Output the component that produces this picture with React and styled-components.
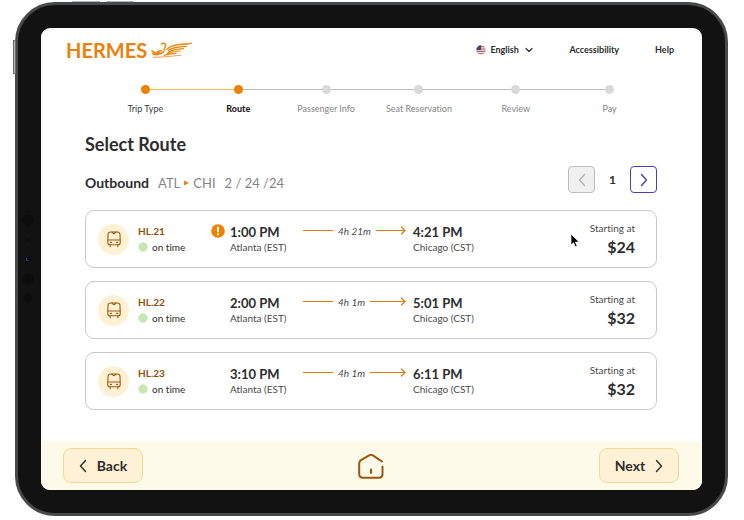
import React from 'react';
import styled, { createGlobalStyle } from 'styled-components';

const GlobalStyle = createGlobalStyle`
* {
    box-sizing: border-box;
}

body {
    margin: 0;
    background: #ffffff;
    color: #2d2d2d;
    font-family: Lato, "Liberation Sans", sans-serif;
    font-variant-ligatures: none;
}

button, select {
    font-family: inherit;
    color: inherit;
}
`;

const Page = styled.div`
    display: flex;
    min-height: 100vh;
    padding: 2px 16px 4px 15px;
`;

const Device = styled.div`
    position: relative;
    display: flex;
    flex: 1;
    padding: 23px;
    border: 3px solid #48494a;
    border-radius: 40px;
    background: #121212;
`;

const SideKey = styled.span`
    position: absolute;
    top: 35px;
    left: -5px;
    width: 3px;
    height: 34px;
    border: 1px solid #6c6c6c;
    background: #b5b5b5;
`;

const TopKey = styled.span`
    position: absolute;
    top: -4px;
    left: ${props => props.$left};
    width: 28px;
    height: 1px;
    background: #b5b5b5;
`;

const Sensors = styled.svg`
    position: absolute;
    top: 205px;
    left: 3px;
`;

const Screen = styled.div`
    display: flex;
    flex-direction: column;
    flex: 1;
    border-radius: 9px;
    background: #ffffff;
    overflow: hidden;
`;

const Header = styled.header`
    display: flex;
    align-items: center;
    justify-content: space-between;
    padding: 10px 28px 0 25px;
`;

const Brand = styled.a`
    display: flex;
    align-items: center;
    gap: 4px;
    color: #e8820c;
    font-size: 20px;
    font-weight: 700;
    line-height: 24px;
    text-decoration: none;
`;

const Nav = styled.nav`
    display: flex;
    align-items: center;
    gap: 36px;
`;

const NavLink = styled.a`
    color: #2d2d2d;
    font-size: 9px;
    font-weight: 700;
    line-height: 12px;
    text-decoration: none;
`;

const Language = styled.label`
    display: flex;
    align-items: center;
    gap: 4px;
`;

const LanguageSelect = styled.select`
    appearance: none;
    width: 31px;
    padding: 0;
    border: 0;
    background: none;
    font-size: 9px;
    font-weight: 700;
    line-height: 12px;
`;

const Steps = styled.ol`
    display: grid;
    grid-template-columns: 93fr 93fr 83fr 103fr 91fr 97fr;
    margin: 23px 44px 0 58px;
    padding: 0;
    list-style: none;
`;

const Step = styled.li`
    display: flex;
    flex-direction: column;
    gap: 9px;
    color: ${props => props.$color};
    font-size: 9px;
    font-weight: ${props => (props.$current ? 900 : 400)};
    line-height: 12px;
    text-align: center;
    white-space: nowrap;
`;

const Track = styled.span`
    display: flex;
    align-items: center;
`;

const Line = styled.span`
    flex: 1;
    height: 1px;
    background: ${props => props.$color};
`;

const Dot = styled.span`
    width: 9px;
    height: 9px;
    border-radius: 50%;
    background: ${props => (props.$done ? '#ee8100' : '#d9d9d9')};
`;

const Main = styled.main`
    flex: 1;
    padding: 17px 45px 30px 44px;
`;

const Title = styled.h1`
    margin: 0;
    font-size: 18px;
    font-weight: 700;
    line-height: 24px;
`;

const TripBar = styled.div`
    display: flex;
    align-items: center;
    justify-content: space-between;
    margin: 10px 0 17px;
`;

const Trip = styled.div`
    display: flex;
    align-items: center;
    gap: 9px;
    padding-top: 7px;
    color: #858585;
    font-size: 13px;
    line-height: 20px;
`;

const TripName = styled.h2`
    margin: 0;
    color: #2d2d2d;
    font-size: 14px;
    font-weight: 700;
`;

const Cities = styled.span`
    display: flex;
    align-items: center;
    gap: 4px;
`;

const Pager = styled.div`
    display: flex;
    align-items: center;
    gap: 14px;
    font-size: 12px;
    font-weight: 700;
`;

const PageButton = styled.button`
    display: flex;
    align-items: center;
    justify-content: center;
    width: 27px;
    height: 27px;
    padding: 0;
    border: 1px solid #4a3fb5;
    border-radius: 4px;
    background: #ffffff;
    color: #4a3fb5;

    &:disabled {
        border-color: #bdbdbd;
        background: #f0f0f0;
        color: #b5b5b5;
    }
`;

const Routes = styled.ul`
    position: relative;
    display: flex;
    flex-direction: column;
    gap: 13px;
    margin: 0;
    padding: 0;
    list-style: none;
`;

const Route = styled.li`
    display: grid;
    grid-template-columns: 40px 73px 19px 73px 110px auto 1fr;
    align-items: center;
    height: 58px;
    padding: 0 21px 0 12px;
    border: 1px solid #c9c9c9;
    border-radius: 9px;
`;

const TrainBadge = styled.span`
    display: flex;
    align-items: center;
    justify-content: center;
    width: 31px;
    height: 31px;
    border-radius: 50%;
    background: #fff1d3;
`;

const Cell = styled.div`
    display: flex;
    flex-direction: column;
    align-items: ${props => (props.$end ? 'flex-end' : 'flex-start')};
    padding-bottom: 1px;
    white-space: nowrap;
`;

const TrainName = styled.strong`
    color: #8f4f06;
    font-size: 10px;
    line-height: 16px;
`;

const Status = styled.span`
    display: flex;
    align-items: center;
    gap: 4px;
    font-size: 10px;
    line-height: 16px;
`;

const StatusDot = styled.span`
    width: 10px;
    height: 10px;
    border: 1px solid #dcead2;
    border-radius: 50%;
    background: #c6e8b0;
`;

const AlertSlot = styled.span`
    display: flex;
    height: 30px;
`;

const Time = styled.strong`
    font-size: 13px;
    line-height: 16px;
`;

const Station = styled.span`
    color: #4a4a4a;
    font-size: 10px;
    line-height: 14px;
`;

const Duration = styled.span`
    display: flex;
    align-items: center;
    gap: 5px;
    width: 103px;
    padding-bottom: 17px;
    color: #4a4a4a;
    font-size: 10px;
    font-style: italic;
    line-height: 14px;
    white-space: nowrap;
`;

const Stem = styled.span`
    width: 30px;
    height: 1px;
    background: #dd7c0c;
`;

const Arrow = styled.span`
    display: flex;
    flex: 1;
    align-items: center;
    color: #dd7c0c;
`;

const ArrowHead = styled.svg`
    margin-left: -5px;
`;

const PriceLabel = styled.span`
    color: #4a4a4a;
    font-size: 10px;
    line-height: 16px;
`;

const Price = styled.strong`
    font-size: 16px;
    line-height: 22px;
`;

const Pointer = styled.svg`
    position: absolute;
    top: 23px;
    right: 77px;
`;

const Footer = styled.footer`
    display: flex;
    align-items: center;
    justify-content: space-between;
    height: 49px;
    padding: 0 23px 0 22px;
    background: #fefaea;
`;

const FooterButton = styled.button`
    display: flex;
    align-items: center;
    justify-content: center;
    gap: 10px;
    width: 80px;
    height: 35px;
    padding: 0;
    border: 1px solid #f3d894;
    border-radius: 8px;
    background: #fff1d6;
    font-size: 14px;
    font-weight: 700;
    line-height: 20px;
`;

const HomeLink = styled.a`
    display: flex;
    color: #9c5408;
`;

const steps = [
    { name: 'Trip Type', color: '#3c3c3c', before: 'transparent', after: '#f0b95c', done: true },
    { name: 'Route', color: '#1f1f1f', before: '#f0b95c', after: '#bdbdbd', done: true, current: true },
    { name: 'Passenger Info', color: '#858585', before: '#bdbdbd', after: '#bdbdbd' },
    { name: 'Seat Reservation', color: '#858585', before: '#bdbdbd', after: '#bdbdbd' },
    { name: 'Review', color: '#858585', before: '#bdbdbd', after: '#bdbdbd' },
    { name: 'Pay', color: '#858585', before: '#bdbdbd', after: 'transparent' },
];

const routes = [
    { train: 'HL.21', depart: '1:00 PM', arrive: '4:21 PM', duration: '4h 21m', price: '$24', alert: true },
    { train: 'HL.22', depart: '2:00 PM', arrive: '5:01 PM', duration: '4h 1m', price: '$32' },
    { train: 'HL.23', depart: '3:10 PM', arrive: '6:11 PM', duration: '4h 1m', price: '$32' },
];

const Chevron = ({ left, size = 14 }) => (
    <svg width={size / 2 + 1} height={size} viewBox="0 0 8 14" fill="none" stroke="currentColor" strokeWidth="1.4" strokeLinecap="round" strokeLinejoin="round" aria-hidden="true">
        <path d={left ? 'M6.5 1.5L1.5 7l5 5.5' : 'M1.5 1.5L6.5 7l-5 5.5'} />
    </svg>
);

const WingLogo = () => (
    <svg width="42" height="17" viewBox="0 0 42 17" fill="none" stroke="#e58a1a" strokeLinecap="round" aria-hidden="true">
        <path d="M1 9l4 2.200 3.500-1M1.500 11.500c2 1.200 5.500 1.200 8 .2 1.500-.6 2.500-1.400 3.500-2.500M6.500 9.500l4-.8" strokeWidth="1.600" />
        <path d="M10.500 2.300c1-1.300 3.500-1.500 4 .2.400 1.600-1 3-1.300 5" strokeWidth="1.500" />
        <path d="M15 8C18.500 3.500 22 2 41 1.200c-3 1-6 1.500-9 1.600-6 .2-11 .7-15.500 4.500z" fill="#e58a1a" strokeWidth=".7" />
        <path d="M17.500 8.300c5-3.300 10-3.600 18-4M17 10.200c5-2.800 9-3.200 15.500-3.600M15.500 12c5-2.300 8.500-2.600 13.500-3M13 13.500c4-1.500 8-2 12-2.200" strokeWidth="1.200" />
        <path d="M2 15.200c8 .2 16-.8 28-2" strokeWidth=".8" />
    </svg>
);

const Flag = () => (
    <svg width="10" height="10" viewBox="0 0 10 10" aria-hidden="true">
        <clipPath id="flag-round">
            <circle cx="5" cy="5" r="4.700" />
        </clipPath>
        <g clipPath="url(#flag-round)">
            <path d="M0 0h10v10H0z" fill="#eee6ec" />
            <path d="M0 1h10v1.200H0zM0 3.400h10v1.200H0zM0 5.800h10V7H0zM0 8.200h10v1H0z" fill="#b5605c" />
            <path d="M0 0h5v5H0z" fill="#46437c" />
        </g>
    </svg>
);

const TrainIcon = () => (
    <svg width="14" height="17" viewBox="0 0 14 17" fill="none" stroke="#a05a10" strokeLinecap="round" strokeLinejoin="round" aria-hidden="true">
        <path d="M3.500 1h7c1.400 0 2.300.9 2.500 2.300l.2 6.200v2.300c0 1.300-.7 2-2 2H2.800c-1.300 0-2-.7-2-2V9.500L1 3.300C1.200 1.900 2.100 1 3.500 1z" strokeWidth="1.100" />
        <path d="M5 1.200L7 2.800l2-1.600M1 9h12M3.200 13.800v2M10.800 13.800v2" strokeWidth="1.100" />
        <path d="M3.300 11.300h1.200M9.500 11.300h1.200" strokeWidth="1.200" />
    </svg>
);

const AlertIcon = () => (
    <svg width="14" height="14" viewBox="0 0 14 14" role="img" aria-label="Service alert">
        <circle cx="7" cy="7" r="6.800" fill="#ee8100" />
        <path d="M7 3.300v4.200" stroke="#ffffff" strokeWidth="1.800" strokeLinecap="round" />
        <circle cx="7" cy="10.400" r="1.100" fill="#ffffff" />
    </svg>
);

const HomeIcon = () => (
    <svg width="26" height="26" viewBox="0 0 26 26" fill="none" stroke="currentColor" strokeWidth="2" strokeLinecap="round" strokeLinejoin="round" aria-hidden="true">
        <path d="M24 8.500L14.500 2.200c-1-.7-2-.7-3 0L3 7.200C1.800 8 1.200 9 1.200 10.500V21c0 2.500 1.300 3.800 3.800 3.800h16c2.500 0 3.500-1.300 3.500-3.800v-7.500" />
        <path d="M13 16.500v3.500" />
    </svg>
);

const RouteCard = ({ data }) => (
    <Route>
        <TrainBadge><TrainIcon /></TrainBadge>
        <Cell>
            <TrainName>{data.train}</TrainName>
            <Status><StatusDot />on time</Status>
        </Cell>
        <AlertSlot>{data.alert && <AlertIcon />}</AlertSlot>
        <Cell>
            <Time>{data.depart}</Time>
            <Station>Atlanta (EST)</Station>
        </Cell>
        <Duration>
            <Stem />
            {data.duration}
            <Arrow>
                <Line $color="#dd7c0c" />
                <ArrowHead width="6" height="9" viewBox="0 0 6 9" fill="none" stroke="currentColor" strokeWidth="1.200" strokeLinecap="round">
                    <path d="M1.500 1l3.500 3.500L1.500 8" />
                </ArrowHead>
            </Arrow>
        </Duration>
        <Cell>
            <Time>{data.arrive}</Time>
            <Station>Chicago (CST)</Station>
        </Cell>
        <Cell $end>
            <PriceLabel>Starting at</PriceLabel>
            <Price>{data.price}</Price>
        </Cell>
    </Route>
);

const App = () => (
    <React.Fragment>
        <GlobalStyle />
        <Page>
            <Device>
                <SideKey />
                <TopKey $left="54px" />
                <TopKey $left="88px" />
                <Sensors width="14" height="100" viewBox="0 0 14 100" aria-hidden="true">
                    <circle cx="7" cy="10" r="5.500" fill="#0c0c0c" />
                    <circle cx="7" cy="30" r="1.200" fill="#0c0c0c" />
                    <circle cx="7" cy="49" r="3" fill="#0b0d1c" />
                    <path d="M5.500 48v2.500h2" fill="none" stroke="#2f3570" />
                    <circle cx="7" cy="69" r="5.500" fill="#0c0c0c" />
                    <circle cx="7" cy="88" r="4.500" fill="#0c0c0c" />
                </Sensors>
                <Screen>
                    <Header>
                        <Brand href="#home">HERMES<WingLogo /></Brand>
                        <Nav>
                            <Language>
                                <Flag />
                                <LanguageSelect aria-label="Language" defaultValue="en">
                                    <option value="en">English</option>
                                </LanguageSelect>
                                <svg width="8" height="6" viewBox="0 0 8 6" fill="none" stroke="#2d2d2d" strokeWidth="1.200" strokeLinecap="round" strokeLinejoin="round" aria-hidden="true">
                                    <path d="M1 1.500l3 3 3-3" />
                                </svg>
                            </Language>
                            <NavLink href="#accessibility">Accessibility</NavLink>
                            <NavLink href="#help">Help</NavLink>
                        </Nav>
                    </Header>
                    <Steps>
                        {steps.map(step => (
                            <Step key={step.name} $color={step.color} $current={step.current}>
                                <Track>
                                    <Line $color={step.before} />
                                    <Dot $done={step.done} />
                                    <Line $color={step.after} />
                                </Track>
                                {step.name}
                            </Step>
                        ))}
                    </Steps>
                    <Main>
                        <Title>Select Route</Title>
                        <TripBar>
                            <Trip>
                                <TripName>Outbound</TripName>
                                <Cities>
                                    ATL
                                    <svg width="5" height="6" viewBox="0 0 5 6" aria-hidden="true">
                                        <path d="M0 .5L5 3 0 5.500z" fill="#ee8100" />
                                    </svg>
                                    CHI
                                </Cities>
                                <span>2 / 24 /24</span>
                            </Trip>
                            <Pager>
                                <PageButton disabled aria-label="Previous page"><Chevron left /></PageButton>
                                <span>1</span>
                                <PageButton aria-label="Next page"><Chevron /></PageButton>
                            </Pager>
                        </TripBar>
                        <Routes>
                            {routes.map(route => <RouteCard key={route.train} data={route} />)}
                            <Pointer width="10" height="15" viewBox="0 0 10 15" aria-hidden="true">
                                <path d="M1 1v11l2.600-2.300 1.700 4 1.800-.8-1.700-3.800H9z" fill="#000000" stroke="#ffffff" strokeWidth=".7" />
                            </Pointer>
                        </Routes>
                    </Main>
                    <Footer>
                        <FooterButton><Chevron left />Back</FooterButton>
                        <HomeLink href="#home" aria-label="Home"><HomeIcon /></HomeLink>
                        <FooterButton>Next<Chevron /></FooterButton>
                    </Footer>
                </Screen>
            </Device>
        </Page>
    </React.Fragment>
);

export default App;
